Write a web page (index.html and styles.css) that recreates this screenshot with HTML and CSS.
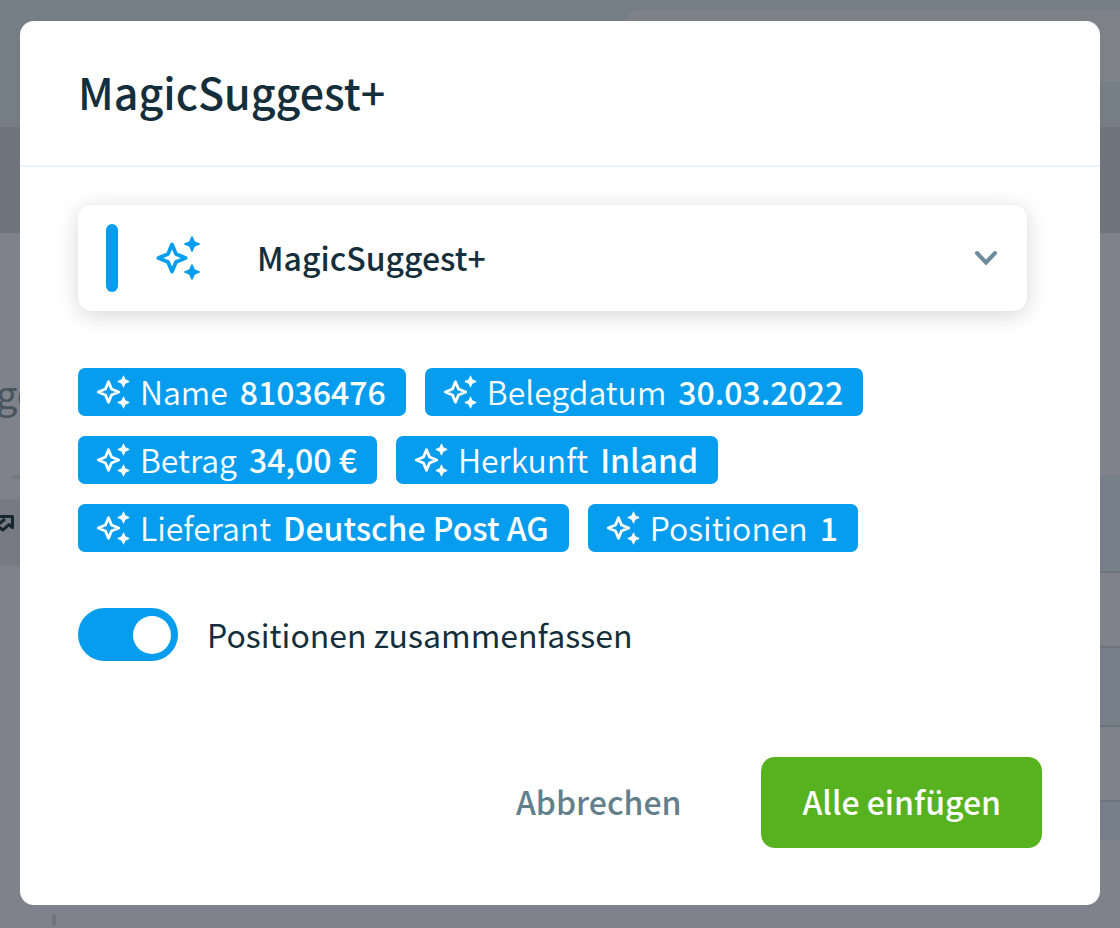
FILE: index.html
```html
<!DOCTYPE html>
<html lang="de">
<head>
    <meta charset="UTF-8">
    <meta name="viewport" content="width=device-width, initial-scale=1.0">
    <title>MagicSuggest+</title>
    <link rel="stylesheet" href="styles.css">
</head>
<body>
    <svg class="sprite" aria-hidden="true">
        <symbol id="sparkles" viewBox="0 0 24 24">
            <path fill="currentColor" stroke="currentColor" stroke-width="0.7" stroke-linejoin="round" d="M19 8.600l-1.100-2.500L15.400 5l2.500-1.100L19 1.400l1.100 2.500L22.600 5l-2.500 1.100zM19 22.600l-1.100-2.500-2.500-1.100 2.500-1.100 1.100-2.500 1.100 2.500 2.500 1.100-2.500 1.100z"/>
            <path fill="none" stroke="currentColor" stroke-width="1.900" stroke-linejoin="round" d="M9 5.200L11 10 15.800 12 11 14 9 18.800 7 14 2.200 12 7 10z"/>
        </symbol>
    </svg>

    <div class="page" aria-hidden="true">
        <div class="page-header">
            <div class="page-search"></div>
        </div>
        <div class="page-toolbar"></div>
        <div class="page-main">
            <div class="page-list">
                <div class="page-title">ge</div>
                <div class="page-dash"></div>
                <div class="page-item">
                    <svg class="link-icon" viewBox="0 0 16 20" fill="none" stroke="currentColor" stroke-width="3" stroke-linejoin="round">
                        <path d="M-1 3.500H12.500V14.500L9 11.500 3 17-1 14M-1 11L5 6"/>
                    </svg>
                </div>
                <div class="page-mark"></div>
            </div>
            <div class="page-table">
                <div class="row row-head"></div>
                <div class="row"></div>
                <div class="row row-alt"></div>
                <div class="row"></div>
                <div class="row row-last"></div>
            </div>
        </div>
    </div>

    <div class="overlay">
        <div class="modal" role="dialog" aria-labelledby="modalTitle">
            <div class="modal-header">
                <h1 id="modalTitle">MagicSuggest+</h1>
            </div>

            <div class="modal-body">
                <button type="button" class="suggest-card" aria-expanded="false">
                    <span class="suggest-bar"></span>
                    <svg class="suggest-icon"><use href="#sparkles"/></svg>
                    <span class="suggest-name">MagicSuggest+</span>
                    <svg class="chevron" viewBox="0 0 24 16" fill="none" stroke="currentColor" stroke-width="4" stroke-linecap="round">
                        <path d="M3 3l9 9.500L21 3"/>
                    </svg>
                </button>

                <div class="chips">
                    <span class="chip"><svg><use href="#sparkles"/></svg><span>Name</span> <b>81036476</b></span>
                    <span class="chip"><svg><use href="#sparkles"/></svg><span>Belegdatum</span> <b>30.03.2022</b></span>
                    <span class="chip"><svg><use href="#sparkles"/></svg><span>Betrag</span> <b>34,00 €</b></span>
                    <span class="chip"><svg><use href="#sparkles"/></svg><span>Herkunft</span> <b>Inland</b></span>
                    <span class="chip"><svg><use href="#sparkles"/></svg><span>Lieferant</span> <b>Deutsche Post AG</b></span>
                    <span class="chip"><svg><use href="#sparkles"/></svg><span>Positionen</span> <b>1</b></span>
                </div>

                <div class="switch-row">
                    <input type="checkbox" class="switch" id="mergePositions" role="switch" checked>
                    <label for="mergePositions">Positionen zusammenfassen</label>
                </div>
            </div>

            <div class="modal-footer">
                <button type="button" class="btn btn-cancel">Abbrechen</button>
                <button type="button" class="btn btn-primary">Alle einfügen</button>
            </div>
        </div>
    </div>
</body>
</html>
```
FILE: styles.css
```css
* {
    margin: 0;
    padding: 0;
    box-sizing: border-box;
}

body {
    font-family: 'Source Sans Pro', 'Noto Sans CJK SC', sans-serif;
    font-size: 32px;
    line-height: 48px;
    color: #142f3b;
    background: #7f828a;
}

button {
    font: inherit;
    color: inherit;
    border: none;
    background: none;
    cursor: pointer;
}

.sprite {
    position: absolute;
    width: 0;
    height: 0;
}

/* Seite im Hintergrund */
.page {
    min-height: 100vh;
    overflow: hidden;
}

.page-header {
    display: flex;
    justify-content: flex-end;
    height: 127px;
    padding: 10px 0 45px;
    background: #767e85;
}

.page-search {
    width: 44%;
    border-radius: 10px 0 0 10px;
    background: #7f8189;
}

.page-toolbar {
    height: 106px;
    background: #6f737b;
}

.page-main {
    display: grid;
    grid-template-columns: 1fr 1fr;
}

.page-list {
    padding-top: 136px;
}

.page-title {
    margin-left: -4px;
    font-size: 38px;
    color: #48545e;
}

.page-dash {
    width: 24px;
    height: 4px;
    margin: 58px 0 20px 12px;
    background: #737780;
}

.page-item {
    height: 67px;
    padding-top: 14px;
    background: #777a82;
}

.link-icon {
    display: block;
    width: 16px;
    height: 20px;
    color: #172631;
}

.page-mark {
    width: 4px;
    height: 12px;
    margin: 348px 0 0 52px;
    background: #71747c;
}

.page-table {
    padding-top: 242px;
}

.row {
    height: 75px;
    border-bottom: 2px solid #6f747c;
}

.row-head {
    height: 98px;
    background: #77808a;
}

.row-alt {
    height: 79px;
    background: #77808a;
}

.row-last {
    height: 38px;
    border: none;
    background: #77808a;
}

/* Dialog */
.overlay {
    position: fixed;
    inset: 0;
    display: flex;
    align-items: center;
    padding: 20px 20px 22px;
}

.modal {
    width: 100%;
    background: white;
    border-radius: 14px;
}

.modal-header {
    padding: 46px 58px 50px;
    border-bottom: 2px solid #eaf6fe;
}

.modal-header h1 {
    font-size: 43px;
    line-height: 48px;
    font-weight: 500;
}

.modal-body {
    padding: 38px 73px 0 58px;
}

.suggest-card {
    display: flex;
    align-items: center;
    width: 100%;
    padding: 19px 29px 19px 28px;
    border-radius: 14px;
    box-shadow: 0 4px 22px rgba(0, 0, 0, 0.16);
    text-align: left;
}

.suggest-bar {
    width: 12px;
    height: 68px;
    border-radius: 6px;
    background: #069def;
}

.suggest-icon {
    width: 48px;
    height: 48px;
    margin: 0 55px 0 36px;
    color: #069def;
}

.suggest-name {
    flex: 1;
    padding-bottom: 2px;
    font-weight: 500;
}

.chevron {
    width: 24px;
    height: 16px;
    color: #6b8c98;
}

.chips {
    display: flex;
    flex-wrap: wrap;
    gap: 20px 19px;
    margin-top: 57px;
}

.chip {
    display: flex;
    align-items: center;
    padding: 0 20px 0 17px;
    border-radius: 7px;
    background: #069def;
    color: white;
    font-weight: 350;
    line-height: 46px;
    white-space: nowrap;
}

.chip span,
.chip b {
    padding-bottom: 2px;
}

.chip svg {
    width: 36px;
    height: 36px;
    margin-right: 9px;
}

.chip b {
    margin-left: 12px;
    font-weight: 500;
}

.switch-row {
    display: flex;
    align-items: center;
    gap: 29px;
    margin-top: 56px;
}

.switch-row label {
    padding-bottom: 2px;
}

.switch {
    appearance: none;
    display: flex;
    align-items: center;
    width: 100px;
    height: 53px;
    padding: 0 7px;
    border-radius: 27px;
    background: #a9b8bf;
    cursor: pointer;
}

.switch::before {
    content: '';
    width: 38px;
    height: 38px;
    border-radius: 50%;
    background: white;
}

.switch:checked {
    justify-content: flex-end;
    background: #069def;
}

.modal-footer {
    display: flex;
    justify-content: flex-end;
    gap: 39px;
    padding: 96px 58px 57px;
}

.btn {
    padding: 20px 41px 23px;
    border-radius: 14px;
    font-weight: 500;
}

.btn-cancel {
    color: #627f8b;
}

.btn-primary {
    background: #57b220;
    color: white;
}
```
